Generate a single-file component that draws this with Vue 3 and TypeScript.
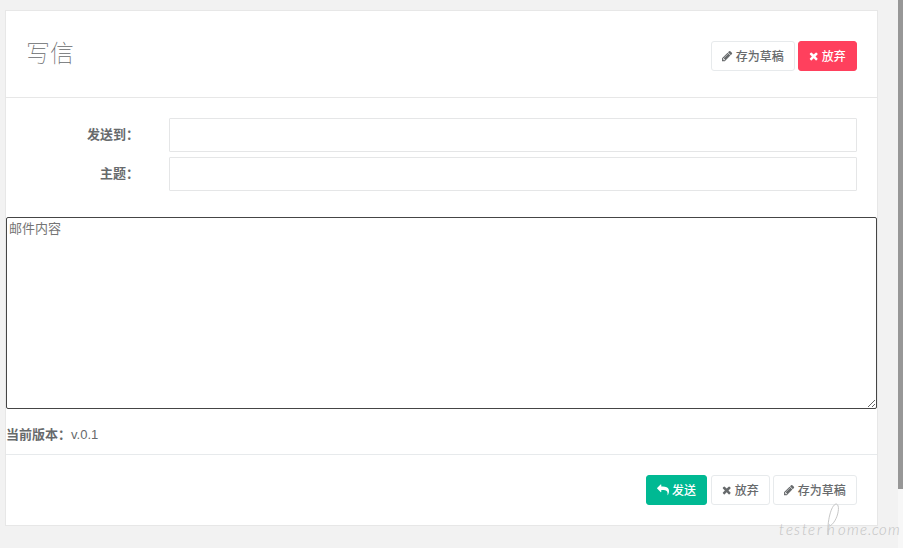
<script setup lang="ts">
import { ref } from 'vue'

type IconName = 'pencil' | 'times' | 'reply'

interface MailAction {
  label: string
  icon: IconName
  variant: 'white' | 'danger' | 'primary'
}

const icons: Record<IconName, { path: string; width: number }> = {
  pencil: {
    width: 1536,
    path: 'M363 1536l91-91-235-235-91 91v107h128v128h107zm523-928q0-22-22-22-10 0-17 7l-542 542q-7 7-7 17 0 22 22 22 10 0 17-7l542-542q7-7 7-17zm-54-192l416 416-832 832h-416v-416zm683 96q0 53-37 90l-166 166-416-416 166-165q36-38 90-38 53 0 91 38l235 234q37 39 37 91z',
  },
  times: {
    width: 1408,
    path: 'M1298 1322q0 40-28 68l-136 136q-28 28-68 28t-68-28l-294-294-294 294q-28 28-68 28t-68-28l-136-136q-28-28-28-68t28-68l294-294-294-294q-28-28-28-68t28-68l136-136q28-28 68-28t68 28l294 294 294-294q28-28 68-28t68 28l136 136q28 28 28 68t-28 68l-294 294 294 294q28 28 28 68z',
  },
  reply: {
    width: 1792,
    path: 'M0 640q0 26 19 45l512 512q19 19 45 19t45-19 19-45v-256h224q98 0 175.500 6t154 21.500 133 42.500 105.500 69.500 80 101 48.500 138.500 17.500 181q0 55-5 123 0 6-2.500 23.500t-2.500 26.500q0 15 8.500 25t23.500 10q16 0 28-17 7-9 13-22t13.500-30 10.500-24q127-285 127-451 0-199-53-333-162-403-875-403h-224v-256q0-26-19-45t-45-19-45 19l-512 512q-19 19-19 45z',
  },
}

const headerActions: MailAction[] = [
  { label: '存为草稿', icon: 'pencil', variant: 'white' },
  { label: '放弃', icon: 'times', variant: 'danger' },
]
const footerActions: MailAction[] = [
  { label: '发送', icon: 'reply', variant: 'primary' },
  { label: '放弃', icon: 'times', variant: 'white' },
  { label: '存为草稿', icon: 'pencil', variant: 'white' },
]

const recipient = ref('')
const subject = ref('')
const content = ref('')
</script>

<template>
  <div class="page">
    <main class="mail-box">
      <header class="mail-header">
        <h2>写信</h2>
        <div class="actions">
          <button v-for="a in headerActions" :key="a.label" type="button" :class="['btn', a.variant]">
            <svg :class="['icon', a.icon]" :viewBox="`0 0 ${icons[a.icon].width} 1792`"><path :d="icons[a.icon].path" /></svg>
            <span>{{ a.label }}</span>
          </button>
        </div>
      </header>
      <form class="fields" @submit.prevent>
        <label for="recipient">发送到：</label>
        <input id="recipient" v-model="recipient" type="text" />
        <label for="subject">主题：</label>
        <input id="subject" v-model="subject" type="text" />
      </form>
      <textarea v-model="content" class="content" placeholder="邮件内容"></textarea>
      <p class="version"><strong>当前版本：</strong>v.0.1</p>
      <footer class="mail-footer">
        <div class="actions">
          <button v-for="a in footerActions" :key="a.label" type="button" :class="['btn', a.variant]">
            <svg :class="['icon', a.icon]" :viewBox="`0 0 ${icons[a.icon].width} 1792`"><path :d="icons[a.icon].path" /></svg>
            <span>{{ a.label }}</span>
          </button>
        </div>
      </footer>
    </main>
    <div class="scroll-track"><div class="scroll-thumb"></div></div>
    <svg class="watermark" viewBox="0 0 125 48">
      <text x="1 8 16 24 30 39 49 60 69 82 90 94 101 110" y="35">testerhome.com</text>
      <path d="M50 35C49 22 53 5 58 4C63 4 60 21 52 26" />
    </svg>
  </div>
</template>

<style>
body {
  margin: 0;
  background: #f2f2f2;
}
</style>

<style scoped>
.page {
  position: relative;
  display: flex;
  justify-content: space-between;
  box-sizing: border-box;
  height: 548px;
  padding-left: 5px;
  overflow: hidden;
  background: #f2f2f2;
  color: #676a6c;
  font: 13px/18px "Liberation Sans", "Noto Sans CJK SC", sans-serif;
}
.mail-box {
  box-sizing: border-box;
  width: 873px;
  height: 516px;
  margin-top: 10px;
  border: 1px solid #e7e7e7;
  background: #fff;
}
.mail-header {
  display: flex;
  justify-content: space-between;
  box-sizing: border-box;
  height: 87px;
  padding: 30px 20px 0;
  border-bottom: 1px solid #e7e7e7;
}
h2 {
  margin: -2px 0 0;
  font-size: 24px;
  line-height: 30px;
  font-weight: 100;
}
.actions {
  display: flex;
  gap: 3px;
}
.btn {
  display: flex;
  align-items: center;
  justify-content: center;
  gap: 3px;
  box-sizing: border-box;
  width: 84px;
  height: 30px;
  padding: 0;
  border: 1px solid #e7eaec;
  border-radius: 3px;
  background: #fff;
  color: inherit;
  font: 500 12px/18px "Noto Sans CJK SC", sans-serif;
  white-space: nowrap;
}
.btn:has(.times) {
  width: 59px;
}
.btn.danger {
  border-color: #ff405d;
  background: #ff405d;
  color: #fff;
}
.btn.primary {
  width: 61px;
  margin-right: 1px;
  border-color: #00b993;
  background: #00b993;
  color: #fff;
}
.icon {
  height: 12px;
  fill: currentColor;
}
.icon.pencil {
  width: 10.3px;
}
.icon.times {
  width: 9.4px;
}
.icon.reply {
  width: 12px;
}
.fields {
  display: grid;
  grid-template-columns: 133px 688px;
  column-gap: 30px;
  row-gap: 5px;
  padding-top: 20px;
}
.fields label {
  padding-top: 8px;
  font-weight: bold;
  text-align: right;
}
.fields input {
  box-sizing: border-box;
  width: 100%;
  height: 34px;
  padding: 6px 12px;
  border: 1px solid #e5e6e7;
  border-radius: 1px;
  background: #fff;
  color: inherit;
  font: inherit;
  outline: none;
}
.content {
  display: block;
  box-sizing: border-box;
  width: 871px;
  height: 192px;
  margin: 26px 0 0;
  padding: 2px;
  border: 1px solid #454545;
  border-radius: 2px;
  background: #fff;
  font: inherit;
  outline: none;
}
.content::placeholder {
  color: #757575;
}
.version {
  margin: 17px 0 10px;
}
.mail-footer {
  display: flex;
  justify-content: flex-end;
  padding: 20px 20px 0;
  border-top: 1px solid #e7eaec;
}
.scroll-track {
  width: 5px;
  background: #f7f7f7;
}
.scroll-thumb {
  height: 489px;
  background: #979797;
}
.watermark {
  position: absolute;
  left: 778px;
  top: 500px;
  width: 125px;
  height: 48px;
}
.watermark text {
  fill: #c2c2c2;
  font: italic 300 15px Lato, sans-serif;
}
.watermark path {
  fill: none;
  stroke: #c7c7c7;
  stroke-width: 1;
}
</style>
